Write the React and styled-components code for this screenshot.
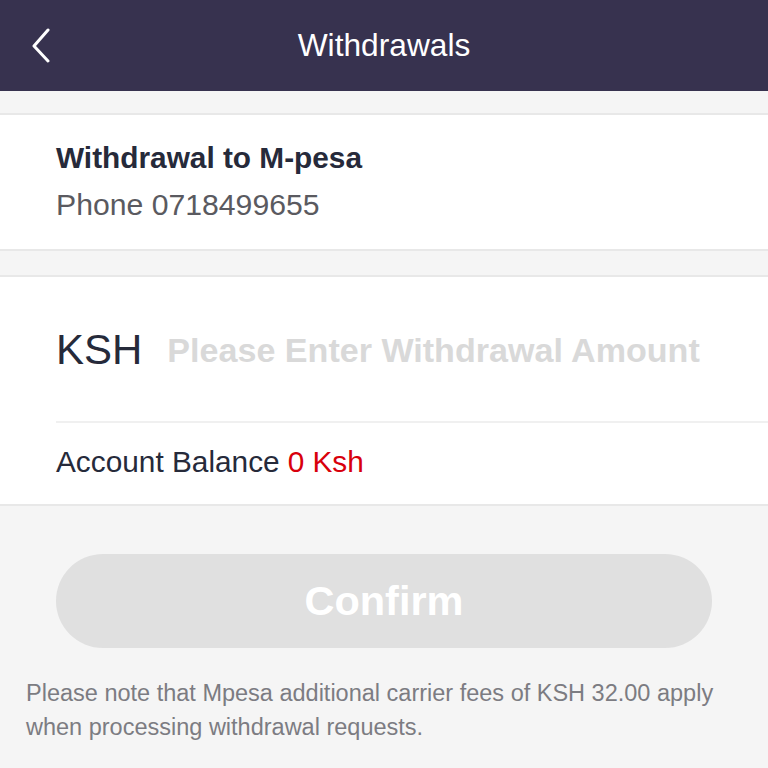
import React from 'react';
import styled, { createGlobalStyle } from 'styled-components';

const GlobalStyle = createGlobalStyle`
  html, body {
    margin: 0;
    padding: 0;
    background: #f5f5f5;
    font-family: "Liberation Sans", Arial, sans-serif;
  }
  * {
    box-sizing: border-box;
  }
`;

const Page = styled.div`
  width: 768px;
  min-height: 768px;
  background: #f5f5f5;
`;

const Header = styled.header`
  height: 91px;
  background: #37324f;
  display: grid;
  grid-template-columns: 91px 1fr 91px;
  align-items: center;
  color: #fff;
`;

const BackButton = styled.button`
  background: none;
  border: none;
  padding: 0 0 0 30px;
  height: 91px;
  display: flex;
  align-items: center;
  cursor: pointer;
`;

const Title = styled.h1`
  margin: 0;
  text-align: center;
  font-size: 31.7px;
  font-weight: normal;
`;

const Card = styled.section`
  background: #fff;
  border-top: 2px solid #e8e8e8;
  border-bottom: 2px solid #e8e8e8;
  margin-top: ${(p) => p.$gap}px;
  padding: ${(p) => p.$padding};
`;

const MethodTitle = styled.div`
  font-size: 29.8px;
  font-weight: bold;
  color: #262a3a;
  line-height: 34px;
`;

const Phone = styled.div`
  font-size: 30.2px;
  color: #5a5a60;
  line-height: 34px;
  margin-top: 13px;
`;

const AmountRow = styled.div`
  display: flex;
  align-items: center;
  gap: 25px;
  height: 146px;
  padding-top: 2px;
  border-bottom: 2px solid #f0f0f0;
`;

const Currency = styled.span`
  font-size: 42px;
  color: #262a3a;
`;

const AmountInput = styled.input`
  flex: 1;
  border: none;
  outline: none;
  background: transparent;
  font-family: inherit;
  font-size: 34.1px;
  font-weight: bold;
  color: #262a3a;
  padding: 0;

  &::placeholder {
    color: #d9d9d9;
  }
`;

const BalanceRow = styled.div`
  height: 81px;
  display: flex;
  align-items: center;
  font-size: 29.8px;
  color: #262a3a;
  padding-bottom: 4px;
`;

const Red = styled.span`
  color: #d8000c;
  margin-left: 8px;
`;

const ButtonWrap = styled.div`
  padding: 48px 56px 0;
`;

const ConfirmButton = styled.button`
  width: 100%;
  height: 94px;
  border: none;
  border-radius: 47px;
  background: #e0e0e0;
  color: #fff;
  font-family: inherit;
  font-size: 41.5px;
  font-weight: bold;
  cursor: not-allowed;
`;

const Note = styled.p`
  margin: 28px 0 0;
  padding: 0 26px;
  font-size: 23.5px;
  line-height: 34px;
  color: #7c7c82;
`;

const ChevronLeft = () => (
  <svg width="22" height="36" viewBox="0 0 22 36" fill="none">
    <path d="M18 2 L4 18 L18 33" stroke="#fff" strokeWidth="3" strokeLinecap="round" strokeLinejoin="round" />
  </svg>
);

const App = () => {
  return (
    <Page>
      <GlobalStyle />
      <Header>
        <BackButton aria-label="Back">
          <ChevronLeft />
        </BackButton>
        <Title>Withdrawals</Title>
        <span />
      </Header>

      <Card $gap={22} $padding="26px 56px 27px">
        <MethodTitle>Withdrawal to M-pesa</MethodTitle>
        <Phone>Phone 0718499655</Phone>
      </Card>

      <Card $gap={24} $padding="0 0 0 56px">
        <AmountRow>
          <Currency>KSH</Currency>
          <AmountInput placeholder="Please Enter Withdrawal Amount" />
        </AmountRow>
        <BalanceRow>
          Account Balance<Red>0 Ksh</Red>
        </BalanceRow>
      </Card>

      <ButtonWrap>
        <ConfirmButton disabled>Confirm</ConfirmButton>
      </ButtonWrap>

      <Note>
        Please note that Mpesa additional carrier fees of KSH 32.00 apply when processing withdrawal requests.
      </Note>
    </Page>
  );
};

export default App;
